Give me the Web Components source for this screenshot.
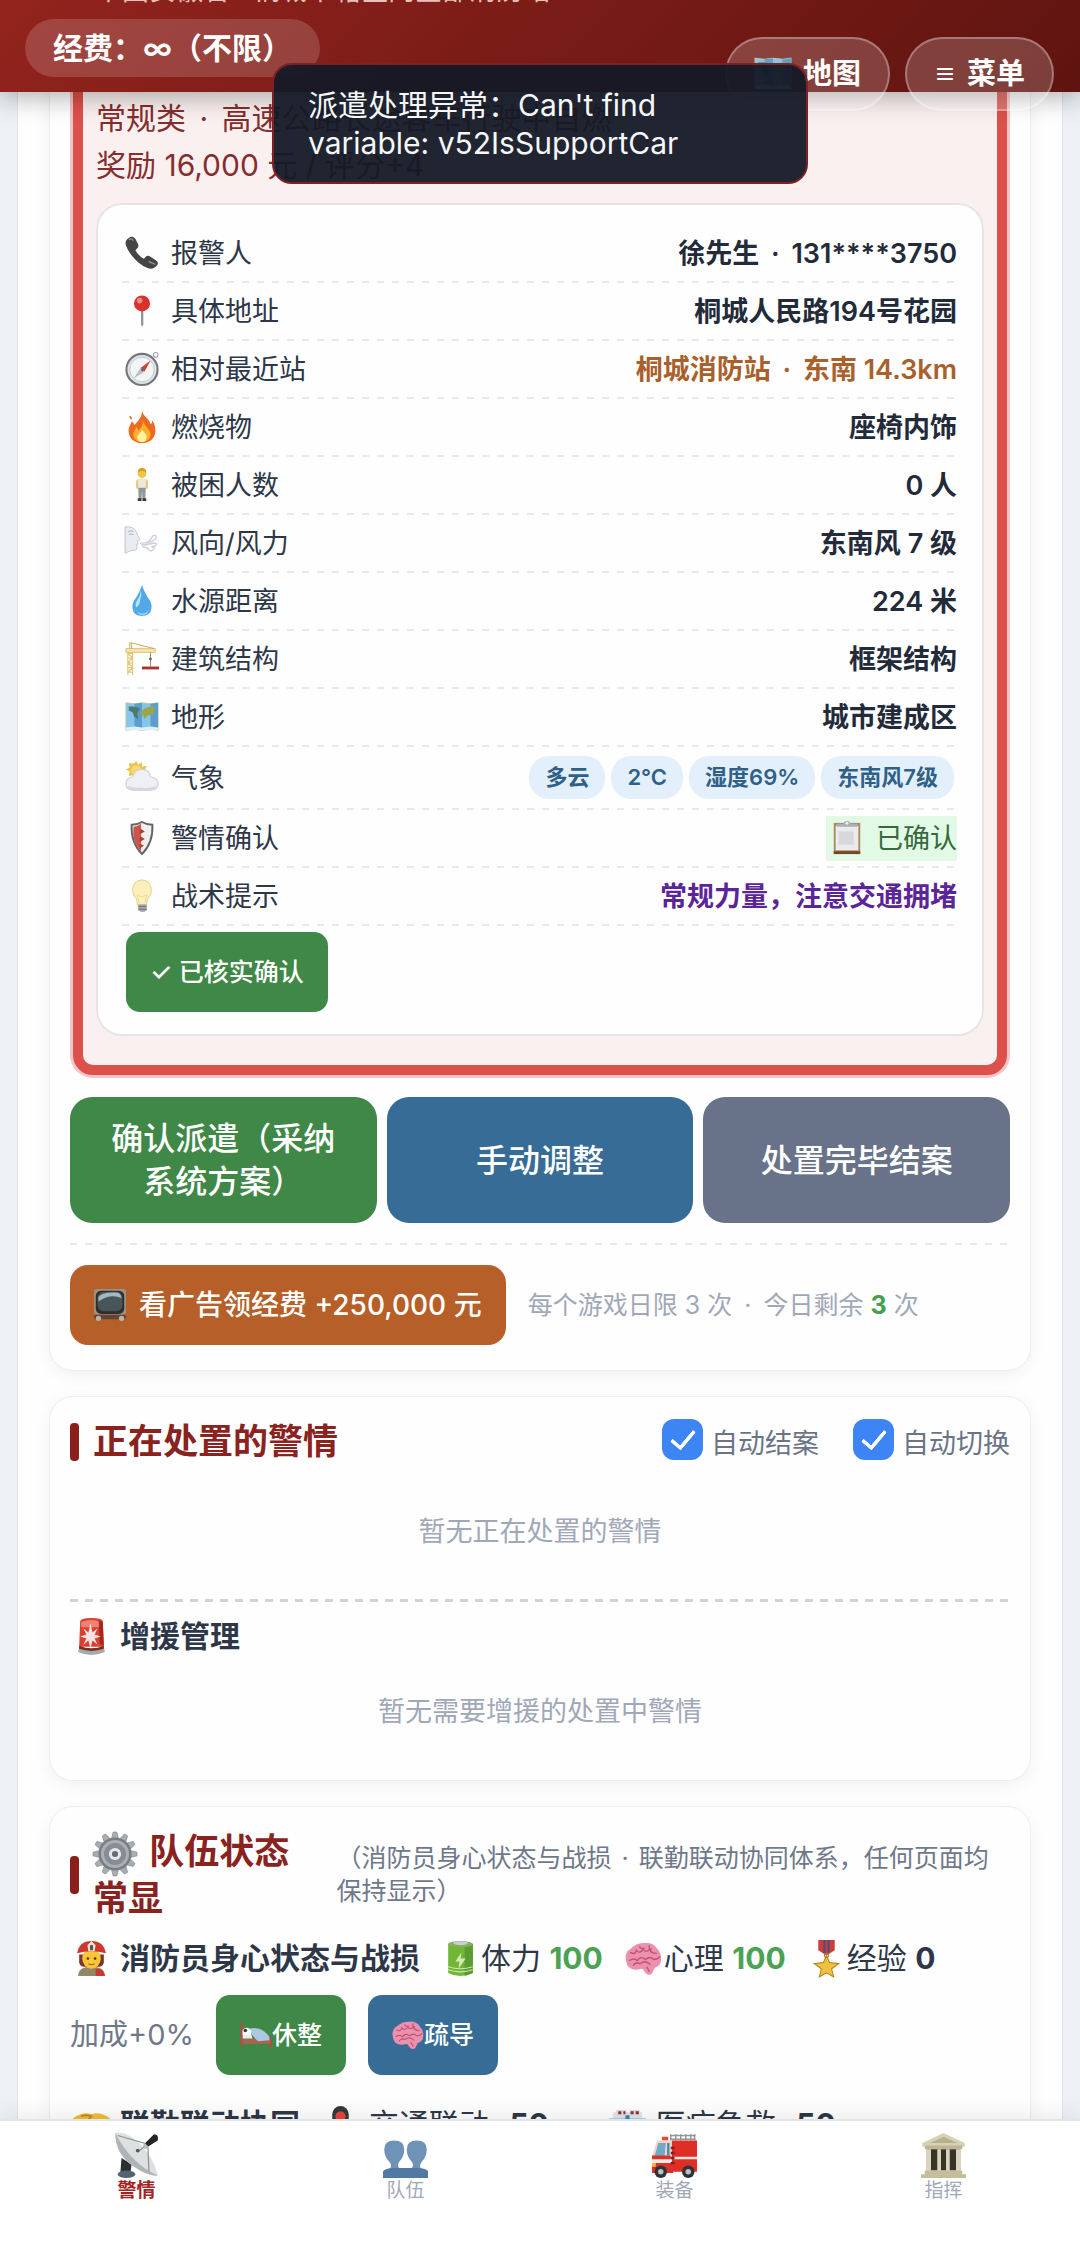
<!DOCTYPE html>
<html lang="zh-CN">
<head>
<meta charset="UTF-8">
<meta name="viewport" content="width=device-width, initial-scale=1">
<title>消防指挥</title>
<style>
* {
    box-sizing: border-box;
}

body {
    margin: 0;
    height: 100vh;
    overflow: hidden;
    background: #edf0f5;
    color: #2d3748;
    font-family: Inter, "Noto Sans CJK SC", sans-serif;
    font-size: 27px;
    line-height: 38px;
    --red: #8a221e;
    --green: #3f8847;
    --blue: #366c96;
    --slate: #687288;
    --orange: #b65f28;
    --muted: #a0a8b8;
    --line: #e9e9eb;
}
</style>
</head>
<body>
<fire-app></fire-app>

<script>
const icons = {
    phone: `<path d="M4 2q4-3 7 1l3 6q1 3-2 5l-1 1q3 6 9 9l2-2q2-2 5 0l6 4q3 2 1 5-4 5-10 3C14 30 5 20 1 10 0 6 1 4 4 2z" fill="#454545"/><path d="M4 4q3-2 5 1M25 27l7 3" stroke="#8b8b8b" stroke-width="1.500" fill="none"/>`,
    pin: `<path d="M17 15h2.400v17l-1.200 3-1.200-3z" fill="#8f9397"/><circle cx="18" cy="10" r="8.500" fill="#d9312b"/><circle cx="15.500" cy="7" r="3" fill="#f08a80"/>`,
    compass: `<circle cx="32.500" cy="3" r="2.500" fill="none" stroke="#9aa0a4" stroke-width="1.200"/><circle cx="18" cy="18.500" r="16.500" fill="#dfe3e5" stroke="#70767a" stroke-width="2.200"/><circle cx="18" cy="18.500" r="13" fill="#f2f4f5" stroke="#c3c8cb"/><path d="M27 9l-6.500 12-4-4z" fill="#d43b35"/><path d="M9 28l7.500-11 4 4z" fill="#b9bfc2"/><circle cx="18.500" cy="19" r="1.500" fill="#666"/>`,
    fire: `<path d="M18 1c2 7 8 8 9 14q2-1 2-4 4 6 3 13c-1 7-7 11-14 11S5 31 4 24c-1-5 2-8 3-12q2 1 3 4C14 11 18 8 18 1z" fill="#ef6a1f"/><path d="M5 6q3 1 2 4-3-1-2-4z" fill="#ef6a1f"/><path d="M19 11c1 6 8 9 8 15 0 5-4 8-9 8s-9-3-9-8c0-4 2-5 3-8 1 1 2 2 2 4 3-3 5-6 5-11z" fill="#fbb12c"/><path d="M18 21c2 3 5 4 5 8q-1 5-5 5t-5-5c0-3 3-4 5-8z" fill="#fff3a0"/>`,
    person: `<circle cx="18" cy="6" r="4.600" fill="#f3c544"/><path d="M13.500 5q0-5 4.500-5t4.500 5q-2-2-4.500-2t-4.500 2z" fill="#d79a22"/><path d="M13 11h10q1.500 3 1 10l-2 1h-8l-2-1q-.500-7 1-10z" fill="#ebe8e2"/><path d="M12.500 12q-1.500 5-.500 10l2-.500v-8zM23.500 12q1.500 5 .500 10l-2-.500v-8z" fill="#edc56b"/><path d="M14 21h8l-.500 12h-3l-.500-9-.500 9h-3z" fill="#92979c"/><path d="M13.500 32h4v3h-4zM18.500 32h4v3h-4z" fill="#3b3b3f"/>`,
    wind: `<path d="M0 1q9-1 12 5 1 4 4 8-1 2-3 2l1 3-2 1 1 3q0 3-6 3l-3 1-4 2z" fill="#e8ebef" stroke="#c1c7ce"/><path d="M3 6q4-2 6 0M4 9q3-1 5 0" stroke="#a8b0b8" fill="none"/><path d="M16 18q8 1 12-5 2-4 4-3t0 4q-4 3-9 4M17 20q8 0 13-2 4 0 3 2t-4 1M18 22q5 0 7 3 2 3 5 0t-2-3" fill="none" stroke="#ccd1d8" stroke-width="1.500"/>`,
    drop: `<path d="M18 1q2 7 6 13 5 6 4 12-1 8-10 8T8 26q-1-6 4-12 4-6 6-13z" fill="#52a9e8"/><path d="M17 7q-1 6-4 10-3 5-1 8 4-3 4-8 2-5 1-10z" fill="#b9e3fb"/><path d="M13 29q6 5 12-1-1 5-7 5-3 0-5-4z" fill="#8fd3fa"/>`,
    crane: `<path d="M3 9h5v26M3 9v26M3 12h5M3 17h5M3 22h5M3 27h5M3 32h5M3 12l5 5-5 5 5 5-5 5" stroke="#e2c876" stroke-width="1.300" fill="none"/><path d="M1 7h31v4H1z" fill="#f4e5b4" stroke="#dcc06c"/><path d="M5 7V1h2v6M7 1l24 6" fill="none" stroke="#c8a84f"/><path d="M27 11v15" stroke="#8b8878" fill="none"/><circle cx="27" cy="18" r="1.500" fill="#6b6657"/><path d="M18 26h18v3H18z" fill="#a8322c"/>`,
    map: `<path d="M1 3l9 1 8-1 9 1 8-1v29l-8-1-9 1-8-1-9 1z" fill="#84c5ea" stroke="#c9c4a1"/><path d="M10 4v27l8 1V3zM27 4v27l8 1V3z" fill="#5d9fca"/><path d="M4 7q7-1 12 2l-3 5 1 6-4-2-2-5-4-2z" fill="#4a7a73"/><path d="M17 12q5-5 13-5l2 3-3 5-6 2-2 3-2-4-3-1z" fill="#9ba54c"/><path d="M1 29l9-1 8 1 9-1 8 1v3H1z" fill="#dff0f8"/>`,
    cloud: `<path d="M12 0l2 4 4-3v5l5-1-2 5 4 2-5 3H8l-4 1 1-5-4-2 4-2-1-5 5 1z" fill="#eec24d"/><circle cx="12" cy="10" r="5.500" fill="#f8da72"/><path d="M8 31q-7-1-7-7t7-7q2-8 10-8 8 0 9 8 8 1 8 7t-7 7z" fill="#eff0f5" stroke="#cfd0da" stroke-width="1.200"/><path d="M3 26q5 3 13 2 10 2 17-2-2 5-6 5H9q-5 0-6-5z" fill="#d6d7e1"/>`,
    shield: `<path d="M18 1q5 3 11 3 1 19-11 31Q6 23 7 4q6 0 11-3z" fill="#f2f0ee" stroke="#626466" stroke-width="2"/><path d="M17 3v29Q7 22 9 6q4 0 8-3z" fill="#cb5549"/><path d="M16 8l5 3-5 3zM16 16l5 3-5 3zM16 24l4 2-4 3z" fill="#b53b32"/>`,
    bulb: `<path d="M18 1q10 1 10 11 0 5-4 9-1 2-1 6H13q0-4-1-6-4-4-4-9Q8 2 18 1z" fill="#fbf0bb" stroke="#e2cf8a"/><path d="M15 26l-2-9 5 2 5-2-2 9" fill="none" stroke="#efdb98"/><path d="M14 27h9v6q-4 4-9 0z" fill="#a7abae"/><path d="M14 29h9M14 32h9" stroke="#686c70"/>`,
    clipboard: `<path d="M4 2h28v33H4z" fill="#b08a5c"/><path d="M6 5h24v26H6z" fill="#ebebed"/><path d="M9 11h16v14H9z" fill="#d8d8dc"/><path d="M4 32h28v3H4z" fill="#70472a"/><path d="M7 6h22V3h-7q-1-3-4-3t-4 3H7z" fill="#a9b0b6"/><circle cx="18" cy="2.500" r="1.500" fill="#eef1f3"/>`,
    tv: `<rect x="0" y="0" width="36" height="29" rx="3" fill="#9c9182"/><rect x="2" y="2" width="32" height="26" rx="6" fill="#302d2a"/><rect x="4" y="3" width="28" height="22" rx="7" fill="#46565b"/><path d="M5 9q4-6 20-5 5 0 6 6-13-5-26 4z" fill="#a3b9bd"/><rect x="0" y="29" width="36" height="5" rx="2" fill="#604536"/><circle cx="5" cy="33" r="3" fill="#b9b2a8"/><circle cx="31" cy="33" r="3" fill="#b9b2a8"/>`,
    siren: `<path d="M7 3q1-3 11-3t11 3l1 25H6z" fill="#d9402f"/><path d="M8 4q10-4 19 0l1 5H8z" fill="#ee8373"/><path d="M25 2l4 2 1 23-4-2z" fill="#a82820"/><path d="M17 5l2 9 5-4-3 6 6 2-6 2 3 6-5-4-2 8-2-8-5 4 3-6-6-2 6-2-3-6 5 4z" fill="#fff" opacity=".85"/><path d="M6 28q12 5 24 0l1 5q-13 6-26 0z" fill="#a7a9aa"/><path d="M6 27q12 5 24 0v3q-12 4-24 0z" fill="#7d2c25"/>`,
    gear: `<g fill="#a8adb1" stroke="#7e8489" stroke-width=".500"><path id="t" d="M15 6l1.500-6h3L21 6zM15 30l1.500 6h3L21 30zM6 15l-6 1.500v3L6 21zM30 15l6 1.500v3L30 21z"/><path d="M15 6l1.500-6h3L21 6zM15 30l1.500 6h3L21 30zM6 15l-6 1.500v3L6 21zM30 15l6 1.500v3L30 21z" transform="rotate(30 18 18)"/><path d="M15 6l1.500-6h3L21 6zM15 30l1.500 6h3L21 30zM6 15l-6 1.500v3L6 21zM30 15l6 1.500v3L30 21z" transform="rotate(60 18 18)"/></g><circle cx="18" cy="18" r="13.500" fill="#777d82"/><circle cx="18" cy="18" r="11.500" fill="#a9afb4"/><circle cx="18" cy="18" r="9" fill="#878d92"/><circle cx="18" cy="18" r="5" fill="#e4e8ea"/><circle cx="18" cy="18" r="2.500" fill="#656b70"/>`,
    fighter: `<path d="M5 35q0-9 13-9t13 9z" fill="#91886a"/><path d="M22 28q8-1 9 7h-9z" fill="#c83a2f"/><path d="M6 14h24v8q-1 4-4 4H10q-3 0-4-4z" fill="#7c3529"/><ellipse cx="18" cy="18" rx="9" ry="10" fill="#f8c534"/><circle cx="14.500" cy="18" r="1.300" fill="#503622"/><circle cx="21.500" cy="18" r="1.300" fill="#503622"/><path d="M15 23q3 2 6 0" stroke="#ad642b" stroke-width="1.200" fill="none"/><path d="M4 13Q6 1 18 1t14 12q-14-4-28 0z" fill="#cf3830"/><path d="M18 1l4 4-1 6h-6l-1-6z" fill="#efe7d2"/><path d="M16.500 5h3v5h-3z" fill="#4e5960"/>`,
    battery: `<path d="M6 4h24v28q-12 6-24 0z" fill="#72b636"/><path d="M22 4h8v28l-8 3z" fill="#5a9c2f"/><ellipse cx="18" cy="4" rx="12" ry="3" fill="#86b158"/><ellipse cx="18" cy="3" rx="7" ry="1.800" fill="#c9cdd4"/><path d="M19 12l-6 9h4l-1 7 7-10h-5z" fill="#d3ecb8"/><path d="M6 26q12 4 24 0M6 29q12 4 24 0" stroke="#cce6b1" fill="none"/>`,
    brain: `<path d="M1 20Q-1 12 6 8q5-5 13-5 8-1 12 5 5 5 4 12 0 5-6 7-1 2-3 6-3 2-6-1l-3-4-6 1q-9 0-10-9z" fill="#eb91ae"/><path d="M5 12q5 3 6-2 3 4 7-1 2 4 6 0 1 4 7 4M4 20q5-3 8 0 3-5 8-1 4-4 8 0 4 0 6-3M8 25q2-4 7-2 4-4 10 1M14 6q1 3 5 2M24 5q-2 3 2 4M21 26l3 5" fill="none" stroke="#bf5275" stroke-width="1.300"/>`,
    medal: `<path d="M10 0h16v10l-8 5-8-5z" fill="#cc3d3c"/><path d="M15 0h2v13l-2-1zM19 0h2v12l-2 1z" fill="#484e81"/><path d="M18 15l3 7 9 1-7 5 2 8-7-4-7 4 2-8-7-5 9-1z" fill="#efc13c" stroke="#ad8125"/><circle cx="18" cy="15" r="2" fill="none" stroke="#ad8125"/>`,
    bed: `<path d="M0 4h3v27H0zM33 20h3v13h-3z" fill="#9b5945"/><path d="M3 22h31v6H3z" fill="#a76550"/><path d="M3 13l9 1 2 8H3z" fill="#e6edf3"/><path d="M10 11q14-4 23 9v4l-12 1q-7-4-11-14z" fill="#acc7e0"/><path d="M3 12q6-5 10 2l-2 4H3z" fill="#f6f8fa"/><circle cx="6" cy="13" r="2" fill="#383536"/>`,
    handshake: `<path d="M0 12Q10 5 18 8q8-3 18 4-2 11-10 15l-8 3-9-5Q2 20 0 12z" fill="#f2bd35"/><path d="M8 10q5-2 10 0l-5 5q3 3 6 0l9 8M13 24l3-4M17 27l3-4" stroke="#b98223" fill="none" stroke-width="1.500"/>`,
    traffic: `<rect x="10" y="0" width="16" height="36" rx="8" fill="#35383b"/><circle cx="18" cy="10" r="5" fill="#ea443c"/><circle cx="18" cy="20" r="4" fill="#d2a92b"/><circle cx="18" cy="29" r="4" fill="#43a351"/>`,
    hospital: `<path d="M4 6h28v29H4z" fill="#dbe7ee"/><path d="M7 4h10v5H7zM20 4h10v5H20z" fill="#e6dede"/><path d="M9 5h3v3H9zM14 5h2v3h-2zM21 5h3v3h-3zM26 5h3v3h-3z" fill="#8d3434"/><path d="M0 12h36v7H0z" fill="#9fcae0"/><path d="M16 9h4v4h4v4h-4v4h-4v-4h-4v-4h4z" fill="#3186b9"/>`,
    satellite: `<path d="M6 20l8 5-1 8H5z" fill="#2c2f32"/><ellipse cx="10" cy="33" rx="7" ry="3" fill="#556270"/><path d="M1 0q0 17 15 27 12 8 19 7Q32 20 20 8 9-2 1 0z" fill="#dde0e1"/><path d="M1 0q0 17 15 27 12 8 19 7Q14 25 1 0z" fill="#afb4b7"/><path d="M3 2l24 7 1 22M27 9l-8 6" stroke="#8d9295" fill="none"/><path d="M25 8l7-7q4 0 3 5l-8 5z" fill="#232426"/><path d="M24 8l4 3-3 2-2-2z" fill="#b7bbbd"/><circle cx="19" cy="14" r="1.500" fill="#555"/>`,
    people: `<path d="M0 36v-5q1-2 6-3 1-3-1-5-4-4-4-10 0-7 8-7t8 7q0 6-4 10-2 3 0 5 4 1 4 3v5z" fill="#6f93b7"/><path d="M19 36v-5q0-2 4-3 2-2 0-5-4-4-4-10 0-7 8-7t8 7q0 6-4 10-2 3-1 5 6 1 6 3v5z" fill="#6f93b7"/><path d="M0 36v-5q1-2 8-3h20q7 1 8 3v5z" fill="#5179a4"/>`,
    truck: `<path d="M15 1v5M19 1v5M23 1v5M27 1v5M31 1v5M34 1v5M15 2h20M15 5h20" stroke="#929797" stroke-width="1.200"/><path d="M8 3h5v3H8z" fill="#e94635"/><path d="M4 6h12v25H0V19z" fill="#f0d4ca"/><path d="M16 6h20v25H12l4-12z" fill="#df2e26"/><path d="M5 8h6l-1 11H2z" fill="#6faac8"/><path d="M12 8h2v10h-2z" fill="#4f8bac"/><path d="M0 20h16v4H0z" fill="#f3ece7"/><path d="M0 18h15v3H0zM0 24h17v8H0z" fill="#dc3128"/><path d="M17 19h19v2H17z" fill="#f5e9df"/><path d="M15 12h3M15 16h3M15 20h3M15 24h3" stroke="#7d2220" stroke-width="2"/><circle cx="7" cy="31" r="5" fill="#303234"/><circle cx="7" cy="31" r="2.200" fill="#bbc0c3"/><circle cx="29" cy="31" r="5" fill="#303234"/><circle cx="29" cy="31" r="2.200" fill="#bbc0c3"/><path d="M0 24h3v3H0z" fill="#f6be36"/>`,
    temple: `<path d="M18 0l17 8v3H1V8z" fill="#d7d2b6"/><path d="M18 3l11 5H7z" fill="#b7b18e"/><path d="M3 10h30v3H3z" fill="#bdb695"/><path d="M5 13h26v17H5z" fill="#383326"/><path d="M4 13h4v18H4zM13 13h3v18h-3zM20 13h3v18h-3zM28 13h4v18h-4z" fill="#d9d5bc"/><path d="M3 30h30v3h3v3H0v-3h3z" fill="#c4bd9c"/>`
};

class EmojiIcon extends HTMLElement {
    constructor() {
        super();
        this.shadowDOM = this.attachShadow({mode: "open"});
    }

    connectedCallback() {
        this.shadowDOM.innerHTML = `
        <style>
        :host {
            display: inline-flex;
            flex: none;
            width: var(--icon-size, 34px);
            height: var(--icon-size, 34px);
            vertical-align: middle;
        }
        svg {
            width: 100%;
            height: 100%;
            overflow: visible;
        }
        </style>
        <svg viewBox="0 0 36 36" aria-hidden="true">${icons[this.getAttribute("name")]}</svg>`;
    }
}
customElements.define("emoji-icon", EmojiIcon);

class DashLine extends HTMLElement {
    constructor() {
        super();
        this.attachShadow({mode: "open"}).innerHTML = `
        <style>
        :host {
            display: block;
            height: 2px;
            background: repeating-linear-gradient(90deg, var(--line) 0 7px, transparent 7px 15px);
        }
        :host([strong]) {
            height: 3px;
            background: repeating-linear-gradient(90deg, #d3d3d5 0 8px, transparent 8px 15px);
        }
        </style>`;
    }
}
customElements.define("dash-line", DashLine);

class InfoCard extends HTMLElement {
    constructor() {
        super();
        this.attachShadow({mode: "open"}).innerHTML = `
        <style>
        :host {
            display: block;
            box-sizing: border-box;
            padding: 22px 20px 25px;
            border: 1px solid #eeeeef;
            border-radius: 24px;
            background: #fefefe;
            box-shadow: 0 4px 16px rgba(0, 0, 0, 0.06);
        }
        </style>
        <slot></slot>`;
    }
}
customElements.define("info-card", InfoCard);

class MidDot extends HTMLElement {
    constructor() {
        super();
        this.attachShadow({mode: "open"}).innerHTML = `
        <style>
        :host {
            display: inline;
            margin: 0 5px;
        }
        </style>
        <slot></slot>`;
    }
}
customElements.define("mid-dot", MidDot);

class ActionButton extends HTMLElement {
    constructor() {
        super();
        this.attachShadow({mode: "open"}).innerHTML = `
        <style>
        :host {
            display: flex;
            --icon-size: 32px;
        }
        button {
            flex: 1;
            display: flex;
            align-items: center;
            justify-content: center;
            min-height: 80px;
            padding: 0 24px;
            border: 0;
            border-radius: 14px;
            background: var(--green);
            color: #fff;
            font: 500 25px/38px Inter, "Noto Sans CJK SC", sans-serif;
        }
        span {
            min-width: 0;
        }
        :host([tone="blue"]) button {
            background: var(--blue);
        }
        :host([tone="slate"]) button {
            background: var(--slate);
        }
        :host([tone="orange"]) button {
            background: var(--orange);
        }
        :host([size="medium"]) button {
            gap: 13px;
            border-radius: 18px;
            font-size: 28px;
        }
        :host([size="large"]) button {
            padding: 20px 28px;
            border-radius: 22px;
            font-size: 32px;
            line-height: 43px;
        }
        </style>
        <button type="button"><slot name="icon"></slot><span><slot></slot></span></button>`;
    }
}
customElements.define("action-button", ActionButton);

class InfoRow extends HTMLElement {
    constructor() {
        super();
        this.shadowDOM = this.attachShadow({mode: "open"});
    }

    connectedCallback() {
        this.shadowDOM.innerHTML = `
        <style>
        :host {
            display: block;
        }
        .row {
            display: flex;
            align-items: center;
            gap: 12px;
            min-height: 56px;
            padding: 0 1px 0 3px;
        }
        .value {
            margin-left: auto;
            display: flex;
            font-weight: 600;
            color: #232b3a;
        }
        .text {
            padding-top: 2px;
        }
        :host([tone="orange"]) .value {
            color: #a9602b;
        }
        :host([tone="purple"]) .value {
            color: #5b259a;
        }
        </style>
        <div class="row">
            <emoji-icon name="${this.getAttribute("icon")}"></emoji-icon>
            <span class="text">${this.getAttribute("label")}</span>
            <span class="value"><span class="text"><slot></slot></span><slot name="tag"></slot></span>
        </div>
        <dash-line></dash-line>`;
    }
}
customElements.define("info-row", InfoRow);

class WeatherTag extends HTMLElement {
    constructor() {
        super();
        this.attachShadow({mode: "open"}).innerHTML = `
        <style>
        :host {
            display: block;
            margin: 9px 3px;
            padding: 0 16px;
            border-radius: 20px;
            background: #e3f0fc;
            color: #2f6087;
            font-size: 22px;
            line-height: 43px;
        }
        </style>
        <slot></slot>`;
    }
}
customElements.define("weather-tag", WeatherTag);

class ConfirmBadge extends HTMLElement {
    constructor() {
        super();
        this.attachShadow({mode: "open"}).innerHTML = `
        <style>
        :host {
            display: flex;
            align-items: center;
            gap: 12px;
            padding-left: 4px;
            background: #e1f9e5;
            color: #37693d;
            font-weight: 400;
            line-height: 45px;
        }
        </style>
        <emoji-icon name="clipboard"></emoji-icon><slot></slot>`;
    }
}
customElements.define("confirm-badge", ConfirmBadge);

class CardTitle extends HTMLElement {
    constructor() {
        super();
        this.attachShadow({mode: "open"}).innerHTML = `
        <style>
        :host {
            display: flex;
            align-items: center;
            gap: 14px;
            --icon-size: 44px;
        }
        :host::before {
            content: "";
            flex: none;
            width: 9px;
            height: 38px;
            border-radius: 4px;
            background: #8a1f1c;
        }
        h2 {
            margin: 0;
            color: var(--red);
            font-size: 35px;
            font-weight: 700;
            line-height: 45px;
        }
        </style>
        <h2><slot></slot></h2>`;
    }
}
customElements.define("card-title", CardTitle);

class CheckToggle extends HTMLElement {
    constructor() {
        super();
        this.attachShadow({mode: "open"}).innerHTML = `
        <style>
        :host {
            display: block;
            color: #6b7486;
        }
        label {
            display: flex;
            align-items: flex-start;
            gap: 8px;
        }
        input {
            appearance: none;
            display: grid;
            place-items: center;
            width: 41px;
            height: 41px;
            margin: 0;
            border: 2px solid #b8c0cc;
            border-radius: 12px;
        }
        input:checked {
            border: 0;
            background: #3d84f5;
        }
        input:checked::after {
            content: "";
            width: 10px;
            height: 20px;
            margin-bottom: 6px;
            border: solid #fff;
            border-width: 0 4px 4px 0;
            border-radius: 2px;
            transform: rotate(40deg);
        }
        span {
            padding-top: 6px;
        }
        </style>
        <label><input type="checkbox" checked><span><slot></slot></span></label>`;
    }
}
customElements.define("check-toggle", CheckToggle);

class EmptyHint extends HTMLElement {
    constructor() {
        super();
        this.attachShadow({mode: "open"}).innerHTML = `
        <style>
        :host {
            display: block;
            padding: 24px;
            color: var(--muted);
            text-align: center;
        }
        </style>
        <slot></slot>`;
    }
}
customElements.define("empty-hint", EmptyHint);

class IconText extends HTMLElement {
    constructor() {
        super();
        this.shadowDOM = this.attachShadow({mode: "open"});
    }

    connectedCallback() {
        this.shadowDOM.innerHTML = `
        <style>
        :host {
            display: flex;
            align-items: center;
            gap: 2px;
            min-height: 46px;
            font-size: 30px;
            --icon-size: 37px;
        }
        :host([heading]) {
            gap: 10px;
            padding-left: 3px;
            font-weight: 600;
        }
        :host([wide]) {
            gap: 10px;
            margin-right: 38px;
        }
        :host([wide]) ::slotted(b) {
            margin-left: 12px;
        }
        </style>
        <emoji-icon name="${this.getAttribute("icon")}"></emoji-icon>
        <span><slot></slot></span>`;
    }
}
customElements.define("icon-text", IconText);

class FloatButton extends HTMLElement {
    constructor() {
        super();
        this.attachShadow({mode: "open"}).innerHTML = `
        <style>
        :host {
            display: block;
            --icon-size: 38px;
        }
        button {
            display: flex;
            align-items: center;
            gap: 11px;
            height: 74px;
            padding: 0 27px;
            border: 2px solid rgba(255, 255, 255, 0.3);
            border-radius: 37px;
            background: rgba(255, 255, 255, 0.18);
            color: #fff;
            font: 600 29px/40px Inter, "Noto Sans CJK SC", sans-serif;
        }
        ::slotted(span) {
            font-size: 22px;
        }
        </style>
        <button type="button"><slot></slot></button>`;
    }
}
customElements.define("float-button", FloatButton);

class TopBar extends HTMLElement {
    constructor() {
        super();
        this.attachShadow({mode: "open"}).innerHTML = `
        <style>
        :host {
            display: block;
            position: relative;
            z-index: 2;
            background: linear-gradient(135deg, #93231d 0%, #5f1410 100%);
            box-shadow: 0 6px 24px rgba(0, 0, 0, 0.3);
        }
        header {
            height: 92px;
            overflow: hidden;
            padding: 0 25px;
            color: #fff;
        }
        .place {
            margin-top: -26px;
            padding-left: 70px;
            color: #eac0bb;
            font-size: 27px;
            line-height: 34px;
        }
        .funds {
            display: inline-block;
            margin-top: 11px;
            padding: 0 28px;
            border-radius: 29px;
            background: rgba(255, 255, 255, 0.16);
            font-size: 30px;
            font-weight: 600;
            line-height: 58px;
        }
        </style>
        <header>
            <div class="place">中国安徽省 · 桐城市辖区内全部消防站</div>
            <div class="funds">经费：∞（不限）</div>
        </header>`;
    }
}
customElements.define("top-bar", TopBar);

class ToastMessage extends HTMLElement {
    constructor() {
        super();
        this.attachShadow({mode: "open"}).innerHTML = `
        <style>
        :host {
            display: block;
            box-sizing: border-box;
            position: absolute;
            z-index: 4;
            top: 63px;
            left: 0;
            right: 0;
            width: 536px;
            margin: 0 auto;
            padding: 21px 34px 20px;
            border: 2px solid #7d2126;
            border-radius: 20px;
            background: rgba(20, 25, 38, 0.95);
            color: #f6f7f9;
            font-size: 30px;
        }
        </style>
        <div role="alert"><slot></slot></div>`;
    }
}
customElements.define("toast-message", ToastMessage);

class TabItem extends HTMLElement {
    constructor() {
        super();
        this.shadowDOM = this.attachShadow({mode: "open"});
    }

    connectedCallback() {
        this.shadowDOM.innerHTML = `
        <style>
        :host {
            flex: 1;
            --icon-size: 45px;
        }
        a {
            display: flex;
            flex-direction: column;
            align-items: center;
            padding-top: 12px;
            color: var(--muted);
            font-size: 19px;
            line-height: 25px;
            text-decoration: none;
        }
        :host([active]) a {
            color: #a3231f;
            font-weight: 600;
        }
        </style>
        <a href="#${this.getAttribute("icon")}">
            <emoji-icon name="${this.getAttribute("icon")}"></emoji-icon>
            <slot></slot>
        </a>`;
    }
}
customElements.define("tab-item", TabItem);

class TabBar extends HTMLElement {
    constructor() {
        super();
        this.attachShadow({mode: "open"}).innerHTML = `
        <style>
        :host {
            display: block;
            position: relative;
            z-index: 2;
            background: #fff;
            border-top: 2px solid #e3e4e6;
            box-shadow: 0 -4px 20px rgba(0, 0, 0, 0.08);
        }
        nav {
            display: flex;
            padding: 0 2px 38px;
        }
        </style>
        <nav><slot></slot></nav>`;
    }
}
customElements.define("tab-bar", TabBar);

class AlarmPanel extends HTMLElement {
    constructor() {
        super();
        this.attachShadow({mode: "open"}).innerHTML = `
        <style>
        .alarm {
            margin: 0 3px;
            padding: 30px 13px 29px;
            border: 10px solid #dc514c;
            border-radius: 20px;
            background: #fbf0f0;
            box-shadow: 0 0 0 3px rgba(229, 62, 62, 0.3);
        }
        .summary {
            margin: 0 0 14px;
            color: #862d2d;
            font-size: 30px;
            line-height: 47px;
        }
        .details {
            padding: 20px 24px 22px;
            border: 2px solid #e8e4e6;
            border-radius: 26px;
            background: #fefefe;
        }
        .verify {
            display: flex;
            padding: 6px 4px 0;
        }
        .actions {
            display: grid;
            grid-template-columns: repeat(3, 1fr);
            gap: 10px;
            margin: 22px 0 20px;
        }
        .reward {
            display: flex;
            align-items: center;
            gap: 22px;
            margin-top: 20px;
            color: var(--muted);
            font-size: 25px;
        }
        .reward b {
            color: #43a04b;
        }
        </style>
        <info-card>
            <div class="alarm">
                <p class="summary">常规类 <mid-dot>·</mid-dot> 高速公路长途客车行驶中自燃<br>奖励 16,000 元 / 评分+4</p>
                <div class="details">
                    <info-row icon="phone" label="报警人">徐先生 <mid-dot>·</mid-dot> 131****3750</info-row>
                    <info-row icon="pin" label="具体地址">桐城人民路194号花园</info-row>
                    <info-row icon="compass" label="相对最近站" tone="orange">桐城消防站 <mid-dot>·</mid-dot> 东南 14.3km</info-row>
                    <info-row icon="fire" label="燃烧物">座椅内饰</info-row>
                    <info-row icon="person" label="被困人数">0 人</info-row>
                    <info-row icon="wind" label="风向/风力">东南风 7 级</info-row>
                    <info-row icon="drop" label="水源距离">224 米</info-row>
                    <info-row icon="crane" label="建筑结构">框架结构</info-row>
                    <info-row icon="map" label="地形">城市建成区</info-row>
                    <info-row icon="cloud" label="气象">
                        <weather-tag slot="tag">多云</weather-tag>
                        <weather-tag slot="tag">2°C</weather-tag>
                        <weather-tag slot="tag">湿度69%</weather-tag>
                        <weather-tag slot="tag">东南风7级</weather-tag>
                    </info-row>
                    <info-row icon="shield" label="警情确认"><confirm-badge slot="tag">已确认</confirm-badge></info-row>
                    <info-row icon="bulb" label="战术提示" tone="purple">常规力量，注意交通拥堵</info-row>
                    <div class="verify"><action-button>✓ 已核实确认</action-button></div>
                </div>
            </div>
            <div class="actions">
                <action-button size="large">确认派遣（采纳系统方案）</action-button>
                <action-button size="large" tone="blue">手动调整</action-button>
                <action-button size="large" tone="slate">处置完毕结案</action-button>
            </div>
            <dash-line></dash-line>
            <div class="reward">
                <action-button size="medium" tone="orange"><emoji-icon slot="icon" name="tv"></emoji-icon>看广告领经费 +250,000 元</action-button>
                <span>每个游戏日限 3 次 <mid-dot>·</mid-dot> 今日剩余 <b>3</b> 次</span>
            </div>
        </info-card>`;
    }
}
customElements.define("alarm-panel", AlarmPanel);

class ActivePanel extends HTMLElement {
    constructor() {
        super();
        this.attachShadow({mode: "open"}).innerHTML = `
        <style>
        .head {
            display: flex;
            align-items: flex-start;
            justify-content: space-between;
            margin-bottom: 25px;
        }
        .toggles {
            display: flex;
            gap: 34px;
        }
        dash-line {
            margin: 24px 0 11px;
        }
        icon-text {
            margin-bottom: 10px;
        }
        </style>
        <info-card>
            <div class="head">
                <card-title>正在处置的警情</card-title>
                <div class="toggles">
                    <check-toggle>自动结案</check-toggle>
                    <check-toggle>自动切换</check-toggle>
                </div>
            </div>
            <empty-hint>暂无正在处置的警情</empty-hint>
            <dash-line strong></dash-line>
            <icon-text heading icon="siren">增援管理</icon-text>
            <empty-hint>暂无需要增援的处置中警情</empty-hint>
        </info-card>`;
    }
}
customElements.define("active-panel", ActivePanel);

class TeamPanel extends HTMLElement {
    constructor() {
        super();
        this.attachShadow({mode: "open"}).innerHTML = `
        <style>
        .head {
            display: flex;
            align-items: center;
            gap: 22px;
            margin-bottom: 14px;
        }
        card-title {
            flex: 0 0 26%;
        }
        card-title emoji-icon {
            margin-right: 4px;
        }
        .note {
            color: #6f788a;
            font-size: 25px;
            line-height: 33px;
        }
        .note mid-dot {
            margin: 0 3px;
        }
        .status {
            display: flex;
            flex-wrap: wrap;
            align-items: center;
            gap: 14px 22px;
            margin-bottom: 26px;
        }
        .bonus {
            color: #6f788a;
            font-size: 29px;
        }
        .good {
            color: #4ba254;
        }
        </style>
        <info-card>
            <div class="head">
                <card-title><emoji-icon name="gear"></emoji-icon> 队伍状态常显</card-title>
                <span class="note">（消防员身心状态与战损 <mid-dot>·</mid-dot> 联勤联动协同体系，任何页面均保持显示）</span>
            </div>
            <div class="status">
                <icon-text heading icon="fighter">消防员身心状态与战损</icon-text>
                <icon-text icon="battery">体力 <b class="good">100</b></icon-text>
                <icon-text icon="brain">心理 <b class="good">100</b></icon-text>
                <icon-text icon="medal">经验 <b>0</b></icon-text>
                <span class="bonus">加成+0%</span>
                <action-button><emoji-icon slot="icon" name="bed"></emoji-icon>休整</action-button>
                <action-button tone="blue"><emoji-icon slot="icon" name="brain"></emoji-icon>疏导</action-button>
            </div>
            <div class="status">
                <icon-text heading icon="handshake">联勤联动协同</icon-text>
                <icon-text wide icon="traffic">交通联动 <b>50</b></icon-text>
                <icon-text wide icon="hospital">医疗急救 <b>50</b></icon-text>
            </div>
        </info-card>`;
    }
}
customElements.define("team-panel", TeamPanel);

class FireApp extends HTMLElement {
    constructor() {
        super();
        this.attachShadow({mode: "open"}).innerHTML = `
        <style>
        :host {
            display: flex;
            flex-direction: column;
            position: relative;
            height: 100vh;
        }
        main {
            flex: 1;
            min-height: 0;
            overflow: hidden;
        }
        /* the list is scrolled under the top bar */
        .page {
            display: flex;
            flex-direction: column;
            gap: 25px;
            margin: -60px 17px 0;
            padding: 0 31px;
            border: 1px solid #e1e4ea;
            border-top: 0;
            background: #fefefe;
        }
        .tools {
            position: absolute;
            z-index: 3;
            top: 37px;
            right: 26px;
            display: flex;
            gap: 15px;
        }
        </style>
        <top-bar></top-bar>
        <main>
            <div class="page">
                <alarm-panel></alarm-panel>
                <active-panel></active-panel>
                <team-panel></team-panel>
            </div>
        </main>
        <tab-bar>
            <tab-item active icon="satellite">警情</tab-item>
            <tab-item icon="people">队伍</tab-item>
            <tab-item icon="truck">装备</tab-item>
            <tab-item icon="temple">指挥</tab-item>
        </tab-bar>
        <div class="tools">
            <float-button><emoji-icon name="map"></emoji-icon>地图</float-button>
            <float-button><span>≡</span>菜单</float-button>
        </div>
        <toast-message>派遣处理异常：Can't find variable: v52IsSupportCar</toast-message>`;
    }
}
customElements.define("fire-app", FireApp);
</script>
</body>
</html>
